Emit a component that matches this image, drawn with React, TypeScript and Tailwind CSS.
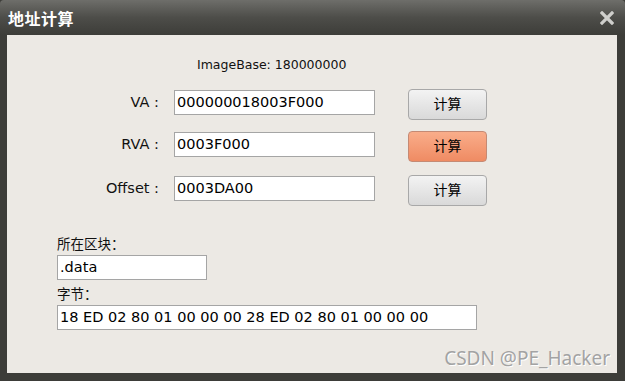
import { ReactNode } from 'react';

const sans = "font-['DejaVu_Sans','Noto_Sans_CJK_SC',sans-serif]";

const TextBox = ({ value, className }: { value: string; className: string }) => (
  <div
    className={`h-[25px] bg-white border border-[#a5a5a5] pl-[2px] flex items-center text-[14.5px] text-[#000] leading-none ${className}`}
  >
    {value}
  </div>
);

const CalcButton = ({ active }: { active?: boolean }) => (
  <div
    className={`w-[79px] h-[31px] rounded-[4px] border flex items-center justify-center text-[14px] text-black ${
      active
        ? 'border-[#c58a74] bg-gradient-to-b from-[#f9ad8a] to-[#ef8b63]'
        : 'border-[#a8a8a8] bg-gradient-to-b from-[#f3f3f3] to-[#d9d9d9]'
    }`}
  >
    计算
  </div>
);

const Row = ({
  label,
  value,
  active,
  className,
}: {
  label: string;
  value: string;
  active?: boolean;
  className: string;
}) => (
  <div className={`flex items-start h-[31px] ${className}`}>
    <div className="flex items-center h-[25px] mt-[1px]">
      <div className="w-[153px] text-right pr-[1px] text-[14.5px] text-[#111]">{label}</div>
      <TextBox value={value} className="ml-[14px] w-[201px]" />
    </div>
    <div className="ml-[33px]">
      <CalcButton active={active} />
    </div>
  </div>
);

const Field = ({ label, children }: { label: string; children: ReactNode }) => (
  <div className="pl-[50px]">
    <div className="text-[13.5px] text-[#111] h-[20px] leading-[20px]">{label}</div>
    {children}
  </div>
);

export default function App() {
  return (
    <div className={`w-[625px] h-[381px] bg-[#3d3d39] flex flex-col ${sans}`}>
      <div className="h-[35px] shrink-0 flex items-center justify-between pl-[8px] pr-[11px] rounded-t-[4px] bg-gradient-to-b from-[#6e6e6a] via-[#4d4d49] to-[#3d3d39]">
        <div className="text-white font-bold text-[16px] tracking-[0.5px] font-['Noto_Sans_CJK_SC',sans-serif]">
          地址计算
        </div>
        <svg width="14" height="14" viewBox="0 0 14 14">
          <path d="M2 2 L12 12 M12 2 L2 12" stroke="#cfcfcc" strokeWidth="3.2" strokeLinecap="square" />
        </svg>
      </div>

      <div className="flex-1 ml-[7px] mr-[8px] mb-[8px] bg-[#ece9e4] flex flex-col">
        <div className="pl-[190px] pt-[21px] h-[54px] text-[12.5px] text-[#111]">ImageBase: 180000000</div>

        <Row label="VA :" value="000000018003F000" className="mb-[11px]" />
        <Row label="RVA :" value="0003F000" active className="mb-[13px]" />
        <Row label="Offset :" value="0003DA00" className="mb-[13px]" />

        <div className="mt-[15px]">
          <Field label="所在区块：">
            <TextBox value=".data" className="w-[150px] mt-[1px]" />
          </Field>
          <div className="h-[4px]" />
          <Field label="字节：">
            <TextBox value="18 ED 02 80 01 00 00 00 28 ED 02 80 01 00 00 00" className="w-[420px] mt-[1px]" />
          </Field>
        </div>

        <div className="mt-auto pb-[1px] pr-[7px] text-right font-['Noto_Sans',sans-serif] text-[19px] text-[#a3a3a3] [text-shadow:1px_1px_0_#ffffff]">
          CSDN @PE_Hacker
        </div>
      </div>
    </div>
  );
}
